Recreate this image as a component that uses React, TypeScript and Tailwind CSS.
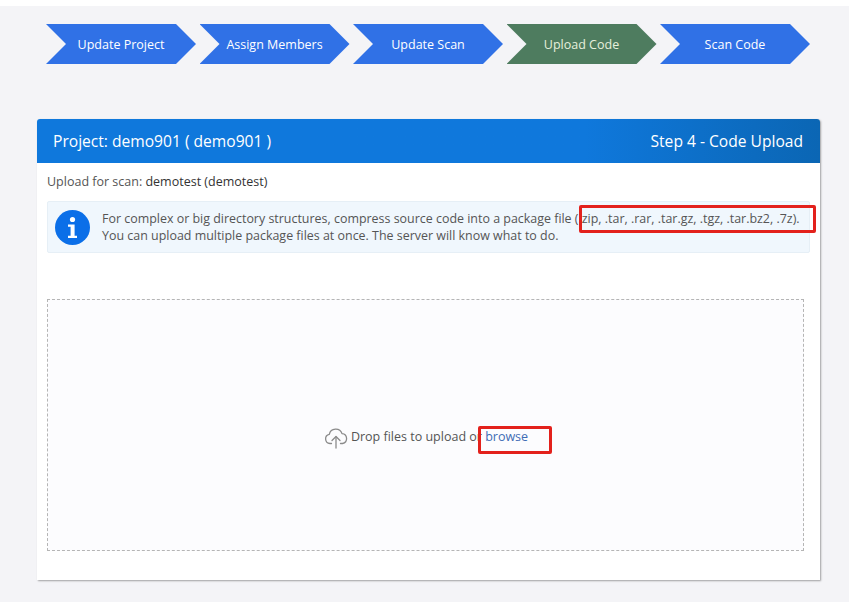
import React from "react";

const steps = [
  { label: "Update Project", active: false },
  { label: "Assign Members", active: false },
  { label: "Update Scan", active: false },
  { label: "Upload Code", active: true },
  { label: "Scan Code", active: false },
];

function InfoIcon() {
  return (
    <svg width="35" height="35" viewBox="0 0 35 35" className="shrink-0">
      <circle cx="17.5" cy="17.5" r="17.5" fill="#0b6fe8" />
      <circle cx="17.5" cy="9.5" r="2.6" fill="#fff" />
      <path d="M13 14.5h6.6v11.2h2.4v2.3H13v-2.3h2.6v-8.9H13z" fill="#fff" />
    </svg>
  );
}

function CloudIcon() {
  return (
    <svg width="24" height="24" viewBox="0 0 24 24" fill="none" stroke="#8a8a8a" strokeWidth="1.3" strokeLinecap="round" strokeLinejoin="round" className="shrink-0">
      <path d="M7.5 18.5H6a4.6 4.6 0 0 1-.7-9.1A6.6 6.6 0 0 1 18 8.6a5 5 0 0 1 .5 9.9h-2" />
      <path d="M12 23V12" />
      <path d="M8 15.5l4-4 4 4" />
    </svg>
  );
}

export default function App() {
  return (
    <div className="w-[849px] h-[602px] overflow-hidden bg-white font-['Open_Sans',sans-serif] text-[12.5px] text-[#555]">
      <div className="mt-[6px] h-[596px] bg-[#f4f4f7] pt-[18px] px-[37px] flex flex-col">
        <div className="flex gap-[3.5px] ml-[9px]">
          {steps.map((s) => (
            <div
              key={s.label}
              className={`w-[150px] h-[40px] shrink-0 flex items-center justify-center pt-[2px] text-[12.5px] [clip-path:polygon(0_0,130px_0,150px_50%,130px_100%,0_100%,20px_50%)] ${
                s.active ? "bg-[#4e7c5f] text-[#e6f0dc]" : "bg-[#3071e6] text-white"
              }`}
            >
              {s.label}
            </div>
          ))}
        </div>

        <div className="mt-[55px] w-[783px] h-[461px] bg-white rounded-t-[3px] shadow-[1px_1px_2px_rgba(0,0,0,0.35)] flex flex-col">
          <div className="h-[44px] shrink-0 rounded-t-[3px] bg-gradient-to-r from-[#0f78dc] from-70% to-[#0b66b4] text-white text-[15.6px] pt-[1px] flex items-center justify-between pl-[16px] pr-[17px]">
            <span>Project: demo901 ( demo901 )</span>
            <span>Step 4 - Code Upload</span>
          </div>

          <div className="px-[10px] flex flex-col">
            <p className="mt-[10px] h-[18px] leading-[18px]">
              Upload for scan: <span className="text-[#333]">demotest (demotest)</span>
            </p>

            <div className="relative mt-[10px] h-[52px] w-[763px] bg-[#f0f7fd] border border-[#e6eff6] rounded-[2px] flex items-center pl-[7px] gap-[12px]">
              <InfoIcon />
              <div className="text-[12.45px] leading-[17.5px] whitespace-nowrap">
                <div>For complex or big directory structures, compress source code into a package file (.zip, .tar, .rar, .tar.gz, .tgz, .tar.bz2, .7z).</div>
                <div>You can upload multiple package files at once. The server will know what to do.</div>
              </div>
              <div className="absolute left-[531px] top-[3px] w-[237px] h-[28px] border-[3px] border-[#e3211c] rounded-[2px]" />
            </div>

            <div className="relative mt-[46px] h-[252px] w-[757px] bg-[#fcfcfe] border border-dashed border-[#b5b5b5] flex items-center justify-center gap-[3px] pl-[1px] pt-[24px]">
              <CloudIcon />
              <span>
                Drop files to upload or <span className="text-[#3f6cb5]">browse</span>
              </span>
              <div className="absolute left-[430px] top-[126px] w-[74px] h-[28px] border-[3px] border-[#e3211c] rounded-[2px]" />
            </div>
          </div>
        </div>
      </div>
    </div>
  );
}
